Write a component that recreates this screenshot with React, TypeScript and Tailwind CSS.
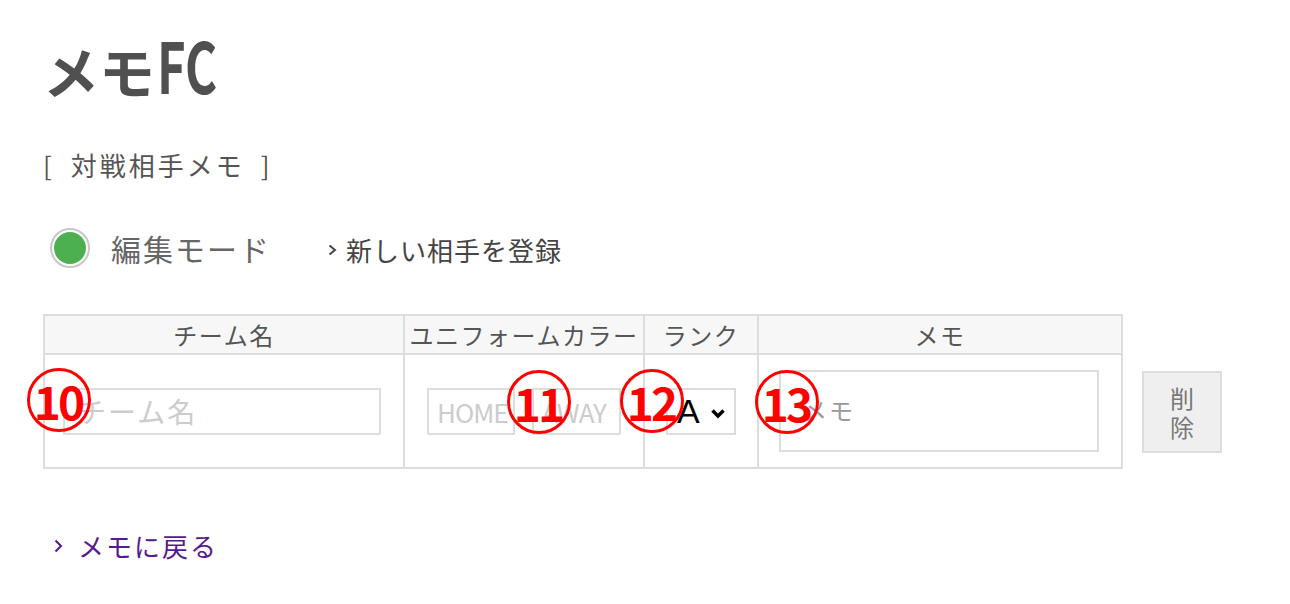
import React from "react";

function Marker({ n, className }: { n: string; className: string }) {
  return (
    <div
      className={
        "absolute w-[64px] h-[64px] rounded-full border-[3px] border-[#ff0000] flex items-center justify-center pointer-events-none " +
        className
      }
    >
      <span className="text-[#ff0000] font-bold text-[46px] leading-none tracking-[-3px] pr-[2px] font-['Noto_Sans_CJK_JP',sans-serif]">
        {n}
      </span>
    </div>
  );
}

function Chevron({ color, h = 12 }: { color: string; h?: number }) {
  return (
    <svg width="9" height={h} viewBox={`0 0 9 ${h}`} className="shrink-0">
      <polyline points={`1.5,1.5 7,${h / 2} 1.5,${h - 1.5}`} fill="none" stroke={color} strokeWidth="2" />
    </svg>
  );
}

export default function App() {
  const headCell =
    "h-[41px] border-t-2 border-b-2 border-r-2 border-[#dddddd] bg-[#f7f7f7] flex items-center justify-center text-[24px] tracking-[1.5px] text-[#555555]";
  const bodyCell = "h-[114px] border-b-2 border-r-2 border-[#dddddd] flex items-center";

  return (
    <div className="relative w-[1290px] h-[604px] bg-white pl-[43px] pt-[24px] text-[#555555] font-['Noto_Sans_CJK_JP','Noto_Sans',sans-serif]">
      {/* Title */}
      <h1 className="h-[80px] leading-[80px] text-[56px] font-bold text-[#505050] whitespace-nowrap">
        メモ
        <span className="inline-block w-[56px] origin-left scale-x-[0.7] text-[70px] ml-[2px]">FC</span>
      </h1>

      {/* Section */}
      <div className="mt-[41px] h-[40px] leading-[40px] text-[26px] tracking-[3px] text-[#555555] whitespace-nowrap">
        <span>[</span>
        <span className="mx-[16px]">対戦相手メモ</span>
        <span>]</span>
      </div>

      {/* Mode row */}
      <div className="mt-[41px] h-[44px] flex items-center">
        <div className="ml-[7px] w-[40px] h-[40px] rounded-full border-2 border-[#c8c8c8] flex items-center justify-center">
          <div className="w-[32px] h-[32px] rounded-full bg-[#4caf50]" />
        </div>
        <span className="ml-[21px] text-[30px] tracking-[2px] text-[#666666] leading-none">編集モード</span>
        <div className="ml-[57px] mt-[4px] flex items-center text-[#444444]">
          <Chevron color="#444444" h={12} />
          <span className="ml-[9px] text-[26px] tracking-[1px] leading-none">新しい相手を登録</span>
        </div>
      </div>

      {/* Table */}
      <div className="mt-[44px] grid grid-cols-[362px_240px_114px_364px_auto]">
        <div className={headCell + " border-l-2"}>チーム名</div>
        <div className={headCell}>ユニフォームカラー</div>
        <div className={headCell}>ランク</div>
        <div className={headCell}>メモ</div>
        <div />

        <div className={bodyCell + " border-l-2 pl-[18px]"}>
          <input
            placeholder="チーム名"
            className="w-[318px] h-[47px] border-2 border-[#dddddd] pl-[13px] text-[28px] tracking-[2px] outline-none placeholder:text-[#cccccc]"
          />
        </div>
        <div className={bodyCell + " justify-center gap-[17px]"}>
          <input
            placeholder="HOME"
            className="w-[88px] h-[47px] border-2 border-[#dddddd] pl-[8px] pr-0 text-[26px] tracking-[-1px] outline-none placeholder:text-[#cccccc]"
          />
          <input
            placeholder="AWAY"
            className="w-[89px] h-[47px] border-2 border-[#dddddd] pl-[8px] pr-0 text-[26px] tracking-[-1px] outline-none placeholder:text-[#cccccc]"
          />
        </div>
        <div className={bodyCell + " justify-center"}>
          <div className="w-[70px] h-[47px] border-2 border-[#dddddd] pl-[9px] flex items-center">
            <span className="text-[34px] leading-none text-black font-['Liberation_Sans',sans-serif]">A</span>
            <svg width="16" height="11" viewBox="0 0 16 11" className="ml-[10px] mt-[4px]">
              <polyline points="2.5,2.5 8,8 13.5,2.5" fill="none" stroke="#000" strokeWidth="3.5" />
            </svg>
          </div>
        </div>
        <div className={bodyCell + " pl-[20px]"}>
          <textarea
            placeholder="メモ"
            className="w-[320px] h-[82px] border-2 border-[#dddddd] resize-none outline-none px-[22px] pt-[20px] text-[24px] tracking-[2px] leading-[36px] placeholder:text-[#999999]"
          />
        </div>
        <div className="h-[114px] flex items-center pl-[19px]">
          <button className="w-[80px] h-[82px] border-2 border-[#dddddd] bg-[#efefef] text-[#777777] flex items-center justify-center">
            <span className="block w-[24px] text-[24px] leading-[29px] break-all text-center">削除</span>
          </button>
        </div>
      </div>

      {/* Back link */}
      <div className="mt-[57px] h-[40px] flex items-center text-[#551a8b]">
        <div className="ml-[11px]">
          <Chevron color="#551a8b" h={14} />
        </div>
        <span className="ml-[15px] text-[26px] tracking-[2px] leading-none">メモに戻る</span>
      </div>

      {/* Annotations */}
      <Marker n="10" className="left-[27px] top-[368px]" />
      <Marker n="11" className="left-[507px] top-[370px]" />
      <Marker n="12" className="left-[620px] top-[369px]" />
      <Marker n="13" className="left-[755px] top-[370px]" />
    </div>
  );
}
